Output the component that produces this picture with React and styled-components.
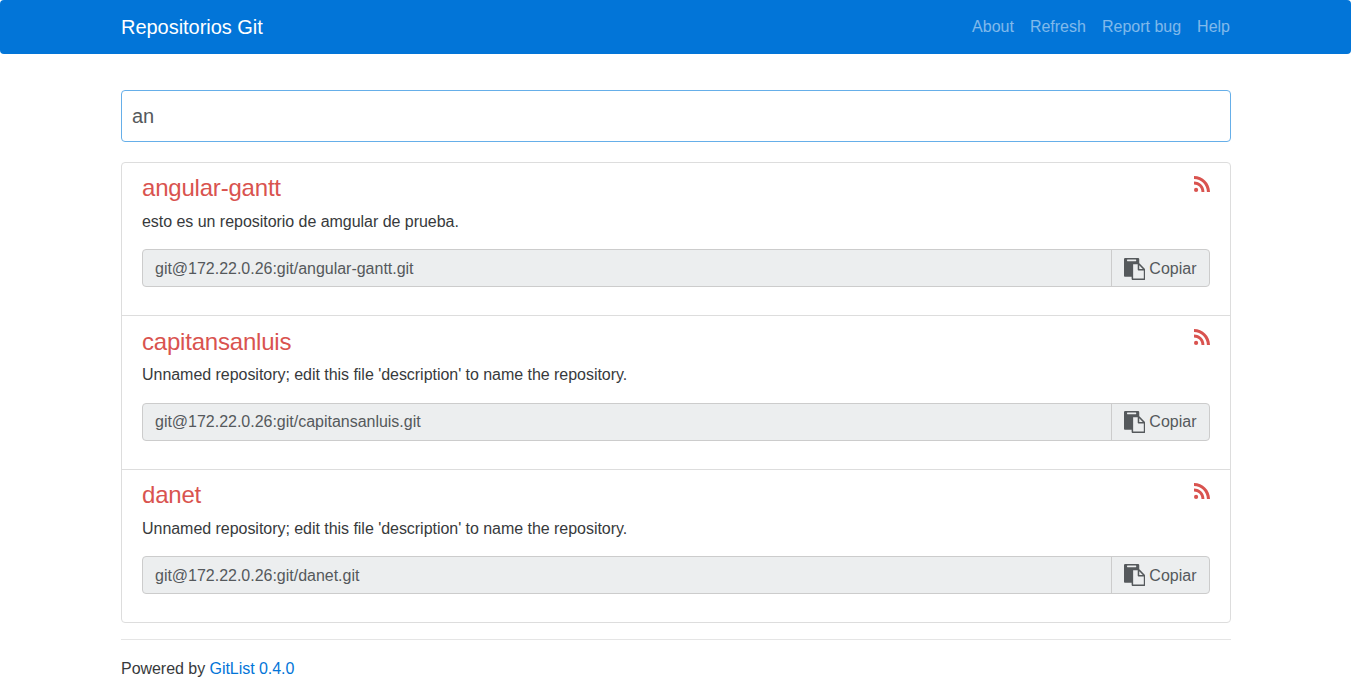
import React from "react";
import styled, { createGlobalStyle } from "styled-components";

const GlobalStyle = createGlobalStyle`
  *, *::before, *::after { box-sizing: border-box; }
  body {
    margin: 0;
    background: #fff;
    color: #373a3c;
    font-family: "Liberation Sans", Arial, sans-serif;
    font-size: 16px;
    line-height: 1.5;
  }
  a { text-decoration: none; }
`;

const Container = styled.div`
  width: 1140px;
  margin: 0 auto;
  padding: 0 14.5px 0 15.5px;
`;

const Navbar = styled.nav`
  height: 54px;
  background: #0275d8;
  border-radius: 4px;
`;

const NavInner = styled(Container)`
  display: flex;
  align-items: center;
  justify-content: space-between;
  height: 54px;
`;

const Brand = styled.a`
  color: #fff;
  font-size: 20px;
  line-height: 30px;
  letter-spacing: -0.03px;
`;

const NavList = styled.div`
  display: flex;
  gap: 16px;
  padding-right: 1px;
`;

const NavLink = styled.a`
  color: rgba(255, 255, 255, 0.5);
`;

const Main = styled(Container)`
  padding-top: 36px;
`;

const SearchInput = styled.input`
  display: block;
  width: 100%;
  height: 52px;
  padding: 0 10px;
  border: 1px solid #66afe9;
  border-radius: 4px;
  outline: none;
  background: #fff;
  color: #55595c;
  font: 20px/1.5 "Liberation Sans", Arial, sans-serif;
`;

const RepoList = styled.div`
  display: flex;
  flex-direction: column;
  margin-top: 20px;
`;

const RepoItem = styled.article`
  padding: 12px 20px;
  border: 1px solid #ddd;
  margin-bottom: -1px;
  &:first-child { border-radius: 4px 4px 0 0; }
  &:last-child { border-radius: 0 0 4px 4px; margin-bottom: 0; }
`;

const RepoHeader = styled.header`
  display: flex;
  justify-content: space-between;
  align-items: flex-start;
  height: 26.4px;
  margin-bottom: 8px;
`;

const RepoName = styled.a`
  padding-top: 0.2px;
  color: #d9534f;
  font-size: 24px;
  line-height: 26.4px;
  letter-spacing: -0.2px;
`;

const FeedLink = styled.a`
  display: flex;
  padding-top: 1px;
  color: #d9534f;
`;

const Description = styled.p`
  margin: 0 0 15.4px;
  padding-top: 0.6px;
  letter-spacing: -0.037px;
`;

const CloneGroup = styled.div`
  display: flex;
  height: 38px;
  margin-bottom: 16px;
  border: 1px solid #ccc;
  border-radius: 4px;
  background: #eceeef;
  color: #55595c;
`;

const CloneUrl = styled.div`
  flex: 1;
  padding: 6.6px 12px 0;
  letter-spacing: -0.015px;
`;

const CopyButton = styled.div`
  display: flex;
  align-items: flex-start;
  gap: 4px;
  width: 98px;
  padding: 6.6px 0 0 12px;
  border-left: 1px solid #ccc;
  cursor: pointer;
`;

const Footer = styled.footer`
  margin-top: 16px;
  padding-top: 16.8px;
  border-top: 1px solid #e5e5e5;
  letter-spacing: -0.04px;
`;

const FooterLink = styled.a`
  color: #0275d8;
`;

const PasteSvg = styled.svg`
  margin-top: 0.6px;
`;

function RssIcon() {
  return (
    <svg width="16" height="16" viewBox="64 64 384 384" fill="currentColor" aria-hidden="true">
      <circle cx="114" cy="398" r="50" />
      <path d="M64 198v70c48 0 94 16 128 50s52 82 52 130h70c0-138-112-250-250-250z" />
      <path d="M64 64v74c171 0 310 139 310 310h74C448 236.3 276 64 64 64z" />
    </svg>
  );
}

function PasteIcon() {
  return (
    <PasteSvg width="21.33" height="22" viewBox="0 0 1792 1792" preserveAspectRatio="none" fill="currentColor" aria-hidden="true">
      <path d="M768 1664h896v-640h-416q-40 0-68-28t-28-68v-416h-384v1152zm256-1440v-64q0-13-9.5-22.5t-22.5-9.5h-704q-13 0-22.5 9.5t-9.5 22.5v64q0 13 9.5 22.5t22.5 9.5h704q13 0 22.5-9.5t9.5-22.5zm256 672h299l-299-299v299zm512 128v672q0 40-28 68t-68 28h-960q-40 0-68-28t-28-68v-160h-544q-40 0-68-28t-28-68v-1344q0-40 28-68t68-28h1088q40 0 68 28t28 68v328q21 13 36 28l408 408q28 28 48 76t20 88z" />
    </PasteSvg>
  );
}

const unnamed = "Unnamed repository; edit this file 'description' to name the repository.";

const repos = [
  { name: "angular-gantt", description: "esto es un repositorio de amgular de prueba." },
  { name: "capitansanluis", description: unnamed },
  { name: "danet", description: unnamed },
];

const links = ["About", "Refresh", "Report bug", "Help"];

export default function App() {
  return (
    <>
      <GlobalStyle />
      <Navbar>
        <NavInner>
          <Brand href="#">Repositorios Git</Brand>
          <NavList>
            {links.map((label) => (
              <NavLink href="#" key={label}>{label}</NavLink>
            ))}
          </NavList>
        </NavInner>
      </Navbar>
      <Main>
        <SearchInput defaultValue="an" aria-label="Search" />
        <RepoList>
          {repos.map((repo) => (
            <RepoItem key={repo.name}>
              <RepoHeader>
                <RepoName href="#">{repo.name}</RepoName>
                <FeedLink href="#" aria-label="RSS"><RssIcon /></FeedLink>
              </RepoHeader>
              <Description>{repo.description}</Description>
              <CloneGroup>
                <CloneUrl>{`git@172.22.0.26:git/${repo.name}.git`}</CloneUrl>
                <CopyButton>
                  <PasteIcon />
                  <span>Copiar</span>
                </CopyButton>
              </CloneGroup>
            </RepoItem>
          ))}
        </RepoList>
        <Footer>
          Powered by <FooterLink href="#">GitList 0.4.0</FooterLink>
        </Footer>
      </Main>
    </>
  );
}
